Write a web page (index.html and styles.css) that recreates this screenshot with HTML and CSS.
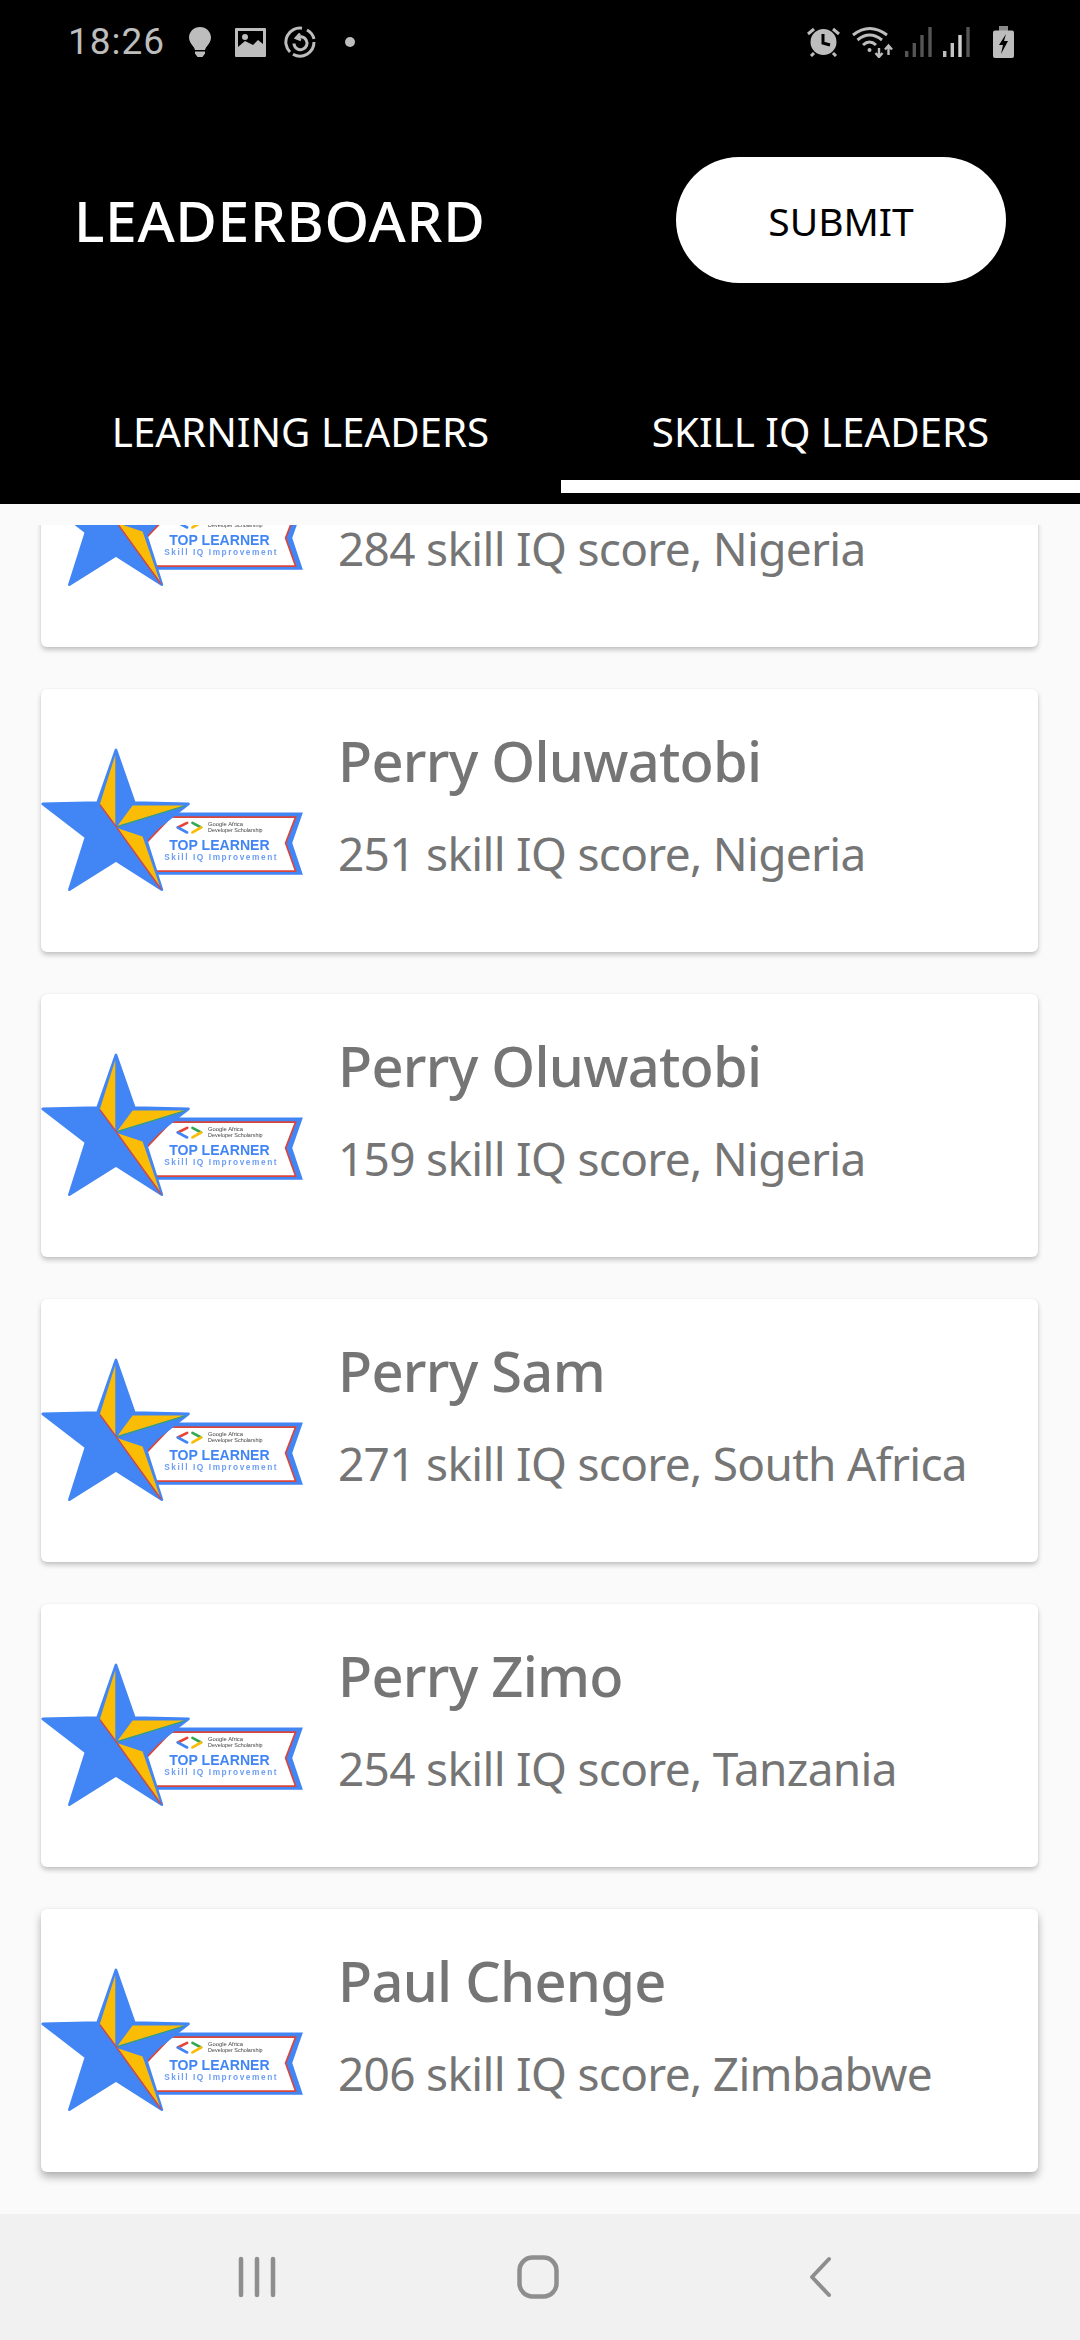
FILE: index.html
```html
<!DOCTYPE html>
<html lang="en">
<head>
<meta charset="utf-8">
<title>Leaderboard</title>
<link rel="stylesheet" href="styles.css">
</head>
<body>
<svg class="defs" width="0" height="0" aria-hidden="true">
  <defs>
    <g id="badge">
      <polygon points="440,248 822,248 790,340 822,435 385,435 330,340" fill="#4285f4"/>
      <polygon points="425,262 800,262 770,340 800,424 375,424 350,340" fill="#fff" stroke="#d9453a" stroke-width="5"/>
      <polygon points="260,60 315,218 478,222 348,322 398,480 260,392 120,480 170,322 40,222 205,218" fill="#4285f4" stroke="#4285f4" stroke-width="8" stroke-linejoin="round"/>
      <polygon points="258,75 258,285 212,222" fill="#fbbc05"/>
      <polygon points="310,227 465,227 265,288" fill="#fbbc05"/>
      <polygon points="265,295 340,320 392,470" fill="#fbbc05"/>
      <path d="M212 225 L260 290 L395 478" fill="none" stroke="#d9453a" stroke-width="4"/>
      <path d="M467 228 L263 291" fill="none" stroke="#34a853" stroke-width="3"/>
      <path d="M474 279 L446 293" fill="none" stroke="#ea4335" stroke-width="8" stroke-linecap="round"/>
      <path d="M446 293 L474 308" fill="none" stroke="#4285f4" stroke-width="8" stroke-linecap="round"/>
      <path d="M490 279 L516 293" fill="none" stroke="#34a853" stroke-width="8" stroke-linecap="round"/>
      <path d="M516 293 L490 308" fill="none" stroke="#fbbc05" stroke-width="8" stroke-linecap="round"/>
      <text class="b-small" x="537" y="288" textLength="105" lengthAdjust="spacingAndGlyphs">Google Africa</text>
      <text class="b-small" x="537" y="308" textLength="164" lengthAdjust="spacingAndGlyphs">Developer Scholarship</text>
      <text class="b-top" x="420" y="360" textLength="302" lengthAdjust="spacingAndGlyphs">TOP LEARNER</text>
      <text class="b-skill" x="405" y="392" textLength="338">Skill IQ Improvement</text>
    </g>
  </defs>
</svg>
<div class="app">
  <header class="header">
    <div class="status">
      <span class="time">18:26</span>
      <svg class="ic ic-bulb" width="22" height="30" viewBox="0 0 22 30"><path d="M11 0C4.9 0 0 4.7 0 10.6c0 3.8 2 6.2 4 8.6 1 1.200 1.700 2.500 2 3.800h10c.3-1.300 1-2.600 2-3.800 2-2.400 4-4.800 4-8.600C22 4.700 17.100 0 11 0Z" fill="#bdbdbd"/><path d="M6 24.500h10v2l-2.500 3.500h-5L6 26.500Z" fill="#bdbdbd"/></svg>
      <svg class="ic ic-image" width="31" height="29" viewBox="0 0 31 29"><path fill-rule="evenodd" d="M1 0h29a1 1 0 0 1 1 1v27a1 1 0 0 1-1 1H1a1 1 0 0 1-1-1V1a1 1 0 0 1 1-1Zm2 3v16l7-6 8 4 5-5 5 4V3Z" fill="#bdbdbd"/><circle cx="10" cy="9" r="3" fill="#bdbdbd"/></svg>
      <svg class="ic ic-sync" width="32" height="32" viewBox="0 0 32 32" fill="none" stroke="#bdbdbd" stroke-width="3"><path d="M18 2.200A14 14 0 0 0 6 26"/><path d="M9 28.200A14 14 0 0 0 30 16"/><path d="M30 13A14 14 0 0 0 23 4"/><path d="M12 12.500A6.500 6.500 0 1 1 10 17.500"/><path d="M16 7.500 12 12l5 2" stroke-width="2.600"/></svg>
      <svg class="ic ic-dot" width="10" height="10" viewBox="0 0 10 10"><circle cx="5" cy="5" r="5" fill="#bdbdbd"/></svg>
      <span class="status-space"></span>
      <svg class="ic" width="33" height="30" viewBox="0 0 33 30"><circle cx="16.500" cy="15" r="13" fill="#bdbdbd"/><path d="M16 7v9l7 2" fill="none" stroke="#000" stroke-width="3"/><path d="M1 7 7 2M26 2l6 5M4 29l3-3M29 29l-3-3" stroke="#bdbdbd" stroke-width="3" fill="none"/></svg>
      <svg class="ic ic-wifi" width="41" height="32" viewBox="0 0 41 32" fill="none" stroke="#bdbdbd"><path d="M1 9Q17.500-4 35 9" stroke-width="3"/><path d="M5.500 14Q17.500 4 30 14" stroke-width="3"/><path d="M11 19Q17.500 13 24 19" stroke-width="3"/><circle cx="17.500" cy="24" r="2" fill="#bdbdbd" stroke="none"/><path d="M27 22v9M23.500 27l3.500 4 3.500-4M36.500 29v-9M33 23.500l3.500-4 3.500 4" stroke-width="2.400"/></svg>
      <svg class="ic ic-sig" width="28" height="30" viewBox="0 0 28 30"><rect x="0" y="24" width="3.400" height="6" fill="#555"/><rect x="7.600" y="16" width="3.400" height="14" fill="#555"/><rect x="15.300" y="8" width="3.400" height="22" fill="#555"/><rect x="23.300" y="0" width="3.400" height="30" fill="#555"/></svg>
      <svg class="ic ic-sig2" width="29" height="30" viewBox="0 0 29 30"><rect x="0" y="24" width="3.400" height="6" fill="#bdbdbd"/><rect x="7.600" y="16" width="3.400" height="14" fill="#c4c4c4"/><rect x="15.300" y="8" width="3.400" height="22" fill="#d0d0d0"/><rect x="23.300" y="0" width="3.400" height="30" fill="#555"/></svg>
      <svg class="ic ic-batt" width="21" height="32" viewBox="0 0 21 32"><rect x="6" y="0" width="9" height="6" fill="#8a8a8a"/><rect x="0" y="4.500" width="21" height="27.500" rx="2" fill="#bdbdbd"/><path d="M13 8 6 19h4l-2 9 7-13h-4Z" fill="#000"/></svg>
    </div>
    <div class="toolbar">
      <h1 class="title">LEADERBOARD</h1>
      <button class="submit">SUBMIT</button>
    </div>
    <nav class="tabs">
      <div class="tab tab-first"><span>LEARNING LEADERS</span></div>
      <div class="tab tab-active"><span>SKILL IQ LEADERS</span></div>
    </nav>
  </header>

  <main class="list">
    <div class="clip">
      <div class="cards">
        <article class="card">
          <svg class="badge" viewBox="36 30 800 460"><use href="#badge"/></svg>
          <div class="info"><div class="name"></div><div class="score">284 skill IQ score, Nigeria</div></div>
        </article>
        <article class="card">
          <svg class="badge" viewBox="36 30 800 460"><use href="#badge"/></svg>
          <div class="info"><div class="name">Perry Oluwatobi</div><div class="score">251 skill IQ score, Nigeria</div></div>
        </article>
        <article class="card">
          <svg class="badge" viewBox="36 30 800 460"><use href="#badge"/></svg>
          <div class="info"><div class="name">Perry Oluwatobi</div><div class="score">159 skill IQ score, Nigeria</div></div>
        </article>
        <article class="card">
          <svg class="badge" viewBox="36 30 800 460"><use href="#badge"/></svg>
          <div class="info"><div class="name">Perry Sam</div><div class="score">271 skill IQ score, South Africa</div></div>
        </article>
        <article class="card">
          <svg class="badge" viewBox="36 30 800 460"><use href="#badge"/></svg>
          <div class="info"><div class="name">Perry Zimo</div><div class="score">254 skill IQ score, Tanzania</div></div>
        </article>
        <article class="card">
          <svg class="badge" viewBox="36 30 800 460"><use href="#badge"/></svg>
          <div class="info"><div class="name">Paul Chenge</div><div class="score">206 skill IQ score, Zimbabwe</div></div>
        </article>
      </div>
    </div>
  </main>

  <footer class="navbar">
    <svg width="38" height="42" viewBox="0 0 38 42" fill="none" stroke="#8e8e8e" stroke-width="4.500" stroke-linecap="round"><path d="M3 3v36M19 3v36M35 3v36"/></svg>
    <svg class="nav-home" width="42" height="44" viewBox="0 0 42 44" fill="none" stroke="#8e8e8e" stroke-width="4.500"><rect x="2.500" y="2.500" width="37" height="39" rx="13"/></svg>
    <svg class="nav-back" width="24" height="42" viewBox="0 0 24 42" fill="none" stroke="#8e8e8e" stroke-width="4" stroke-linecap="round" stroke-linejoin="round"><path d="M21 3 4 21l17 18"/></svg>
  </footer>
</div>
</body>
</html>
```

FILE: styles.css
```css
* { box-sizing: border-box; }
html, body { margin: 0; padding: 0; }
body { width: 1080px; height: 2340px; overflow: hidden; font-family: "Noto Sans", "Open Sans", sans-serif; background: #fafafa; }
.defs { display: block; height: 0; }
.app { display: flex; flex-direction: column; width: 1080px; height: 2340px; }

.header { background: #000; color: #fff; height: 504px; flex: none; display: flex; flex-direction: column; }

.status { display: flex; align-items: center; height: 84px; padding: 0 66px 0 68px; color: #bdbdbd; }
.time { font-family: Roboto, sans-serif; font-size: 37px; width: 94px; letter-spacing: 1px; line-height: 84px; }
.ic { display: block; flex: none; }
.ic-bulb { margin-left: 27px; }
.ic-image { margin-left: 24px; }
.ic-sync { margin-left: 18px; }
.ic-dot { margin-left: 29px; }
.status-space { flex: 1; }
.ic-wifi { margin-left: 12px; }
.ic-sig { margin-left: 12px; }
.ic-sig2 { margin-left: 10px; }
.ic-batt { margin-left: 21px; }

.toolbar { display: flex; align-items: center; justify-content: space-between; height: 126px; margin-top: 73px; padding: 0 74px 0 74px; }
.title { margin: 0; font-size: 57px; font-weight: 500; letter-spacing: .6px; line-height: 70px; color: #fff; }
.submit { width: 330px; height: 126px; border: 0; border-radius: 63px; background: #fff; color: #000; font-family: inherit; font-size: 39px; font-weight: 400; padding: 0; }

.tabs { display: flex; margin-top: 113px; height: 97px; }
.tab { display: flex; justify-content: center; font-size: 40.3px; line-height: 72px; color: #fff; }
.tab-first { width: 561px; padding-left: 40px; }
.tab-active { width: 519px; border-bottom: 13px solid #fff; }

.list { flex: 1; min-height: 0; padding-top: 21px; background: #fafafa; }
.clip { height: 100%; overflow: hidden; }
.cards { display: flex; flex-direction: column; gap: 42px; margin: -141px 42px 0 41px; }
.card { display: flex; height: 263px; flex: none; background: #fff; border-radius: 6px; box-shadow: 0 3px 5px rgba(0,0,0,.22), 0 0 2px rgba(0,0,0,.06); }
.card:last-child { box-shadow: 0 5px 8px rgba(0,0,0,.3), 0 0 2px rgba(0,0,0,.06); }
.badge { width: 267px; height: 153px; margin-top: 51px; flex: none; filter: blur(.5px); }
.b-small { font: 500 16px "Liberation Sans", sans-serif; fill: #444; }
.b-top { font: 700 42px "Liberation Sans", sans-serif; fill: #4285f4; }
.b-skill { font: 700 25px "Liberation Sans", sans-serif; fill: #6d9ef2; }

.info { display: flex; flex-direction: column; margin-left: 30px; color: #757575; }
.name { font-size: 56px; font-weight: 500; letter-spacing: -.75px; line-height: 76px; min-height: 76px; margin-top: 33px; }
.score { font-size: 46px; letter-spacing: -.7px; line-height: 42px; margin-top: 34px; }

.navbar { height: 126px; flex: none; background: #f1f1f1; display: flex; align-items: center; padding: 0 0 0 238px; }
.nav-home { margin-left: 241px; }
.nav-back { margin-left: 249px; }
```
